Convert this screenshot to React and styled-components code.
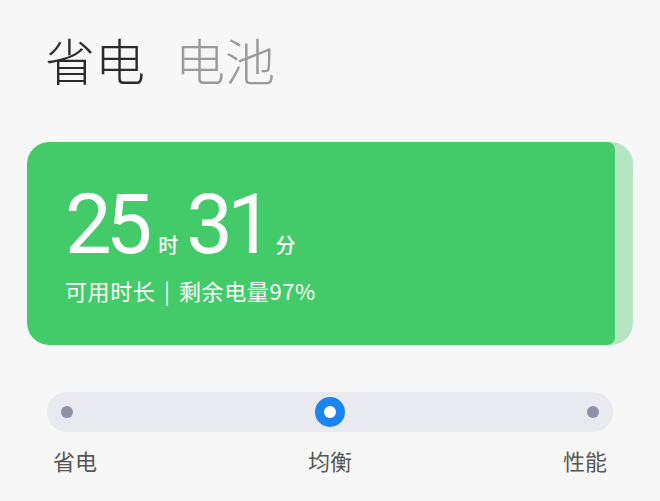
import React from "react";
import styled, { createGlobalStyle } from "styled-components";

const GlobalStyle = createGlobalStyle`
    html, body {
        margin: 0;
        padding: 0;
        background: #f7f7f7;
    }
    body {
        font-family: "Noto Sans CJK SC", "Noto Sans", sans-serif;
    }
`;

const Page = styled.div`
    width: 660px;
    height: 501px;
    box-sizing: border-box;
    padding: 30px 27px 0 27px;
    overflow: hidden;
`;

const Tabs = styled.div`
    display: flex;
    gap: 30px;
    padding-left: 18px;
`;

const Tab = styled.div`
    font-size: 50px;
    line-height: 58px;
    font-weight: 300;
    color: ${(p) => (p.active ? "#2b2b2b" : "#9a9a9a")};
`;

const Card = styled.div`
    margin-top: 54px;
    width: 606px;
    height: 203px;
    border-radius: 22px;
    background: #b4e6c2;
    overflow: hidden;
    display: flex;
`;

const Fill = styled.div`
    box-sizing: border-box;
    height: 100%;
    border-radius: 22px 8px 8px 22px;
    background: #43cb69;
    padding: 36px 0 0 38px;
    color: #fff;
`;

const Time = styled.div`
    display: flex;
    align-items: baseline;
    height: 94px;
`;

const Num = styled.span`
    font-family: Roboto, "Noto Sans", sans-serif;
    font-size: 83px;
    line-height: 94px;
    font-weight: 400;
    letter-spacing: -6px;
`;

const Unit = styled.span`
    font-size: 20px;
    font-weight: 500;
    margin: 0 8px 0 ${(p) => p.gap}px;
`;

const Sub = styled.div`
    margin-top: 4px;
    font-size: 22px;
    line-height: 28px;
    font-weight: 400;
    letter-spacing: 0.6px;
    word-spacing: 3px;
`;

const Mode = styled.div`
    margin-top: 47px;
    padding: 0 20px;
`;

const Track = styled.div`
    position: relative;
    height: 40px;
    border-radius: 20px;
    background: #e8eaf0;
    display: flex;
    align-items: center;
    justify-content: space-between;
    padding: 0 14px;
`;

const Dot = styled.span`
    width: 12px;
    height: 12px;
    border-radius: 50%;
    background: #8c90a8;
    visibility: ${(p) => (p.hidden ? "hidden" : "visible")};
`;

const Knob = styled.span`
    position: absolute;
    left: 50%;
    top: 50%;
    width: 30px;
    height: 30px;
    margin: -15px 0 0 -15px;
    border-radius: 50%;
    background: #1a84f2;
    display: flex;
    align-items: center;
    justify-content: center;
    &::after {
        content: "";
        width: 12px;
        height: 12px;
        border-radius: 50%;
        background: #fff;
    }
`;

const Labels = styled.div`
    display: flex;
    justify-content: space-between;
    padding: 0 6px;
    margin-top: 13px;
    font-size: 22px;
    line-height: 30px;
    color: #555;
`;

const modes = ["省电", "均衡", "性能"];
const active = 1;

export default function App() {
    const level = 97;
    return (
        <>
            <GlobalStyle />
            <Page>
                <Tabs>
                    <Tab active>省电</Tab>
                    <Tab>电池</Tab>
                </Tabs>
                <Card>
                    <Fill style={{ width: `${level}%` }}>
                        <Time>
                            <Num>25</Num>
                            <Unit gap={12}>时</Unit>
                            <Num>31</Num>
                            <Unit gap={8}>分</Unit>
                        </Time>
                        <Sub>可用时长 | 剩余电量{level}%</Sub>
                    </Fill>
                </Card>
                <Mode>
                    <Track>
                        {modes.map((m, i) => (
                            <Dot key={m} hidden={i === active} />
                        ))}
                        <Knob />
                    </Track>
                    <Labels>
                        {modes.map((m) => (
                            <span key={m}>{m}</span>
                        ))}
                    </Labels>
                </Mode>
            </Page>
        </>
    );
}
